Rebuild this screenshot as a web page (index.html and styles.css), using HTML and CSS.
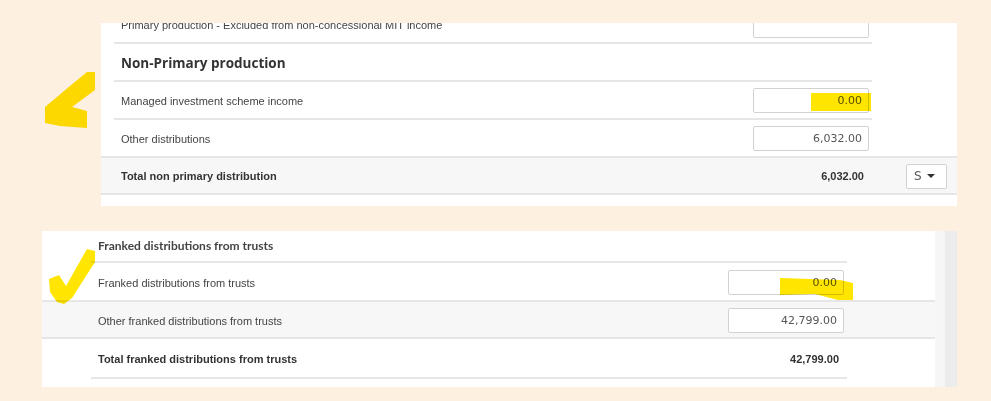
FILE: index.html
```html
<!DOCTYPE html>
<html>
<head>
<meta charset="utf-8">
<link rel="stylesheet" href="styles.css">
</head>
<body>
<div class="page">
  <section class="panel-top">
    <div class="rows">
      <div class="row row-cut">
        <span class="label">Primary production - Excluded from non-concessional MIT income</span>
        <div class="input"></div>
      </div>
      <div class="row row-head">
        <span class="heading">Non-Primary production</span>
      </div>
      <div class="row">
        <span class="label">Managed investment scheme income</span>
        <div class="input">0.00</div>
      </div>
      <div class="row row-last">
        <span class="label">Other distributions</span>
        <div class="input">6,032.00</div>
      </div>
    </div>
    <div class="total-row">
      <div class="total-main">
        <span class="total-label">Total non primary distribution</span>
        <span class="total-value">6,032.00</span>
      </div>
      <div class="select">
        <span>S</span>
        <span class="caret"></span>
      </div>
    </div>
  </section>

  <section class="panel-bottom">
    <div class="main">
      <div class="brow">
        <div class="binner bhead">
          <span class="subheading">Franked distributions from trusts</span>
        </div>
      </div>
      <div class="brow bline">
        <div class="binner b1">
          <span class="label">Franked distributions from trusts</span>
          <div class="input">0.00</div>
        </div>
      </div>
      <div class="brow bline bgray">
        <div class="binner b2">
          <span class="label">Other franked distributions from trusts</span>
          <div class="input">42,799.00</div>
        </div>
      </div>
      <div class="brow">
        <div class="binner btotal">
          <span class="total-label">Total franked distributions from trusts</span>
          <span class="total-value">42,799.00</span>
        </div>
      </div>
    </div>
    <div class="scrollbar">
      <div class="track-a"></div>
      <div class="track-b"></div>
    </div>
  </section>

  <svg class="marks" width="991" height="401" viewBox="0 0 991 401">
    <polygon fill="#ffe500" points="87,72 95,72 95,90 72,107 87,111 87,128 60,126 45,123 45,107 70,86"/>
    <rect x="811" y="93" width="60" height="18" fill="#ffe500"/>
    <polygon fill="#ffe500" points="87,249 95,251 95,262 72,298 64,304 57,302 50,292 49,279 59,275 66,286"/>
    <polygon fill="#ffe500" points="780,278 840,280 853,283 853,300 838,300 815,294 780,295"/>
  </svg>
</div>
</body>
</html>
```

FILE: styles.css
```css
* { box-sizing: border-box; }

html, body {
  margin: 0;
  padding: 0;
}

body {
  background: #fdf0e1;
  font-family: "Liberation Sans", Arial, sans-serif;
  font-size: 11px;
  color: #444;
}

.page {
  position: relative;
  width: 991px;
  height: 401px;
  overflow: hidden;
  padding-top: 23px;
}

/* ---------- top panel ---------- */
.panel-top {
  margin-left: 101px;
  width: 856px;
  height: 183px;
  background: #fff;
  overflow: hidden;
}

.rows {
  margin-left: 13px;
  width: 758px;
  margin-top: -16px;
}

.row {
  display: flex;
  align-items: center;
  justify-content: space-between;
  height: 38px;
  padding: 1px 3px 0 7px;
  border-bottom: 2px solid #e6e6e6;
}

.row-cut {
  height: 37px;
}

.row-last {
  height: 36px;
  border-bottom: none;
}

.label {
  font-family: "Liberation Sans", Arial, sans-serif;
  font-size: 11px;
  color: #444;
}

.heading {
  font-family: "Open Sans", sans-serif;
  font-weight: 700;
  font-size: 13.5px;
  color: #333;
}

.input {
  position: relative;
  width: 116px;
  height: 25px;
  border: 1px solid #d2d2d2;
  border-radius: 2px;
  background: #fff;
  font-family: "DejaVu Sans", sans-serif;
  font-size: 11px;
  color: #555;
  text-align: right;
  line-height: 23px;
  padding-right: 6px;
}

.total-row {
  display: flex;
  align-items: center;
  height: 39px;
  padding-top: 1px;
  background: #f7f7f7;
  border-top: 2px solid #e6e6e6;
  border-bottom: 2px solid #e6e6e6;
}

.total-main {
  display: flex;
  align-items: center;
  justify-content: space-between;
  margin-left: 13px;
  width: 758px;
  padding: 0 8px 0 7px;
}

.total-label,
.total-value {
  font-family: "Liberation Sans", Arial, sans-serif;
  font-weight: 700;
  font-size: 11px;
  color: #333;
}

.select {
  display: flex;
  align-items: center;
  justify-content: space-between;
  margin-left: 34px;
  width: 41px;
  height: 25px;
  padding: 0 11px 0 7px;
  background: #fff;
  border: 1px solid #d2d2d2;
  border-radius: 2px;
  font-family: "DejaVu Sans", sans-serif;
  font-size: 12px;
  color: #555;
}

.caret {
  width: 0;
  height: 0;
  border-left: 4px solid transparent;
  border-right: 4px solid transparent;
  border-top: 4px solid #333;
}

/* ---------- bottom panel ---------- */
.panel-bottom {
  display: flex;
  margin-top: 25px;
  margin-left: 42px;
  width: 915px;
  height: 156px;
}

.main {
  width: 893px;
  background: #fff;
}

.scrollbar {
  display: flex;
  width: 22px;
}

.track-a {
  width: 10px;
  background: #f6f6f6;
}

.track-b {
  width: 12px;
  background: #ececec;
}

.binner {
  display: flex;
  align-items: center;
  justify-content: space-between;
  margin-left: 49px;
  width: 756px;
  padding: 0 3px 0 7px;
}

.bline {
  border-bottom: 2px solid #e6e6e6;
}

.bgray {
  background: #f7f7f7;
}

.bhead {
  height: 32px;
  padding-bottom: 2px;
  border-bottom: 2px solid #e6e6e6;
}

.subheading {
  font-family: Lato, sans-serif;
  font-weight: 700;
  font-size: 12px;
  color: #444;
}

.b1 { height: 37px; padding-top: 2px; }
.b2 { height: 35px; padding-top: 2px; }

.btotal {
  height: 40px;
  padding-top: 1px;
  border-bottom: 2px solid #e6e6e6;
  padding-right: 8px;
}

/* ---------- annotation marks ---------- */
.marks {
  position: absolute;
  left: 0;
  top: 0;
  pointer-events: none;
  mix-blend-mode: multiply;
}
```
